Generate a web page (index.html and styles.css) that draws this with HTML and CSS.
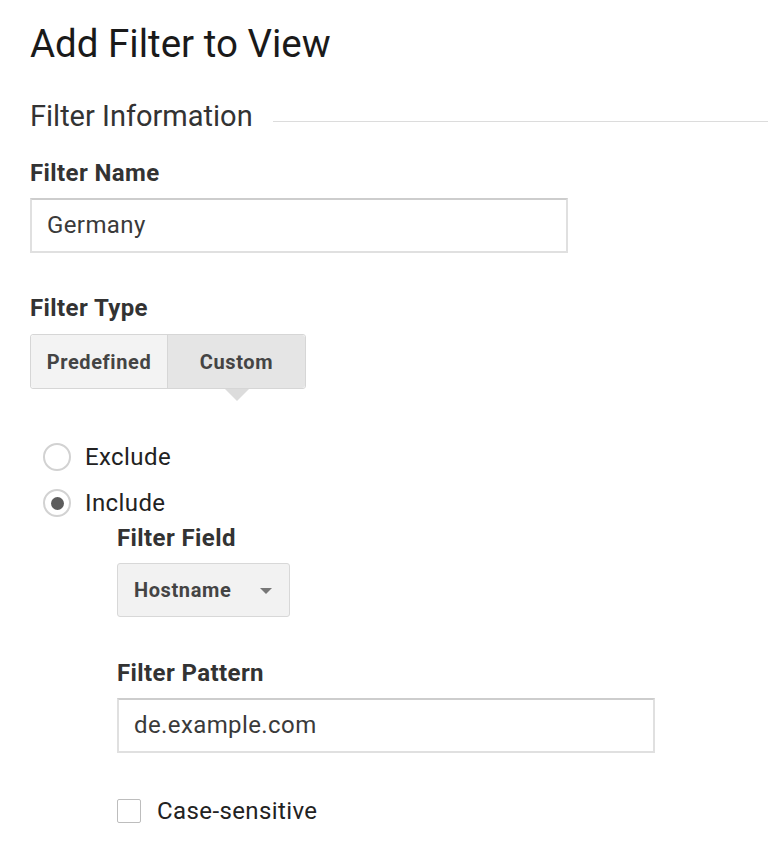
FILE: index.html
```html
<!DOCTYPE html>
<html>
<head>
<meta charset="utf-8">
<link rel="stylesheet" href="styles.css">
</head>
<body>
<div class="page">
  <h1 class="title">Add Filter to View</h1>
  <div class="section-head">
    <span class="section-title">Filter Information</span>
    <span class="section-line"></span>
  </div>

  <div class="label name-label">Filter Name</div>
  <div class="input wide">Germany</div>

  <div class="label type-label">Filter Type</div>
  <div class="seg">
    <div class="seg-btn">Predefined</div>
    <div class="seg-btn active">Custom</div>
  </div>

  <div class="radios">
    <div class="radio-row">
      <span class="radio"></span><span class="radio-text">Exclude</span>
    </div>
    <div class="radio-row">
      <span class="radio checked"></span><span class="radio-text">Include</span>
    </div>
  </div>

  <div class="sub">
    <div class="label">Filter Field</div>
    <div class="select">
      <span class="select-text">Hostname</span>
      <span class="caret"></span>
    </div>

    <div class="label pattern-label">Filter Pattern</div>
    <div class="input wide">de.example.com</div>

    <div class="check-row">
      <span class="checkbox"></span><span class="check-text">Case-sensitive</span>
    </div>
  </div>
</div>
</body>
</html>
```
FILE: styles.css
```css
html, body {
  margin: 0;
  padding: 0;
  background: #fff;
}
body {
  font-family: Roboto, "Liberation Sans", Arial, sans-serif;
  color: #333;
}
.page {
  padding: 20px 0 0 30px;
}
.title {
  margin: 0;
  font-size: 38.5px;
  font-weight: 400;
  color: #1a1a1a;
  line-height: 48px;
}
.section-head {
  display: flex;
  align-items: flex-start;
  margin-top: 30px;
  height: 36px;
}
.section-title {
  font-size: 29px;
  color: #333;
  line-height: 36px;
}
.section-line {
  flex: 1;
  height: 1px;
  background: #dcdcdc;
  margin-left: 20px;
  margin-top: 23px;
}
.label {
  font-size: 24px;
  font-weight: 700;
  letter-spacing: 0.4px;
  color: #333;
  line-height: 30px;
}
.name-label {
  margin-top: 24px;
}
.input {
  box-sizing: border-box;
  height: 55px;
  border: 2px solid #e0e0e0;
  border-top-color: #cdcdcd;
  padding: 0 15px;
  font-size: 24px;
  letter-spacing: 0.4px;
  line-height: 51px;
  color: #3a3a3a;
  margin-top: 10px;
}
.wide {
  width: 538px;
}
.type-label {
  margin-top: 40px;
}
.seg {
  display: flex;
  margin-top: 11px;
  width: 276px;
  height: 55px;
  box-sizing: border-box;
  border: 1px solid #d6d6d6;
  border-radius: 3px;
}
.seg-btn {
  font-size: 20px;
  font-weight: 700;
  letter-spacing: 0.6px;
  color: #444;
  display: flex;
  align-items: center;
  justify-content: center;
}
.seg-btn:first-child {
  width: 136px;
  background: #f3f3f3;
  border-right: 1px solid #d6d6d6;
  border-radius: 3px 0 0 3px;
}
.seg-btn.active {
  flex: 1;
  background: #e5e5e5;
  position: relative;
  border-radius: 0 3px 3px 0;
}
.seg-btn.active::after {
  content: "";
  position: absolute;
  left: 50%;
  bottom: -13px;
  margin-left: -12px;
  border-left: 12px solid transparent;
  border-right: 12px solid transparent;
  border-top: 12px solid #dcdcdc;
}
.radios {
  display: flex;
  flex-direction: column;
  gap: 12px;
  margin-top: 51px;
  margin-left: 13px;
}
.radio-row {
  display: flex;
  align-items: center;
  height: 34px;
}
.radio {
  box-sizing: border-box;
  width: 28px;
  height: 28px;
  border: 2px solid #d2d2d2;
  border-radius: 50%;
  display: flex;
  align-items: center;
  justify-content: center;
}
.radio.checked::after {
  content: "";
  width: 13px;
  height: 13px;
  border-radius: 50%;
  background: #5c5c5c;
}
.radio-text {
  font-size: 24px;
  letter-spacing: 0.4px;
  color: #222;
  margin-left: 14px;
}
.sub {
  margin-left: 87px;
  margin-top: 3px;
}
.select {
  box-sizing: border-box;
  width: 173px;
  height: 54px;
  margin-top: 10px;
  background: #f2f2f2;
  border: 1px solid #d8d8d8;
  border-radius: 3px;
  display: flex;
  align-items: center;
  padding: 0 17px 0 16px;
  font-size: 20px;
  font-weight: 700;
  letter-spacing: 0.6px;
  color: #444;
}
.select-text {
  flex: 1;
}
.caret {
  width: 0;
  height: 0;
  border-left: 6px solid transparent;
  border-right: 6px solid transparent;
  border-top: 6px solid #777;
  margin-top: 2px;
}
.pattern-label {
  margin-top: 41px;
}
.check-row {
  display: flex;
  align-items: center;
  height: 30px;
  margin-top: 43px;
}
.checkbox {
  box-sizing: border-box;
  width: 24px;
  height: 24px;
  border: 1px solid #bdbdbd;
  border-radius: 2px;
}
.check-text {
  font-size: 24px;
  letter-spacing: 0.4px;
  color: #222;
  margin-left: 16px;
}
```
